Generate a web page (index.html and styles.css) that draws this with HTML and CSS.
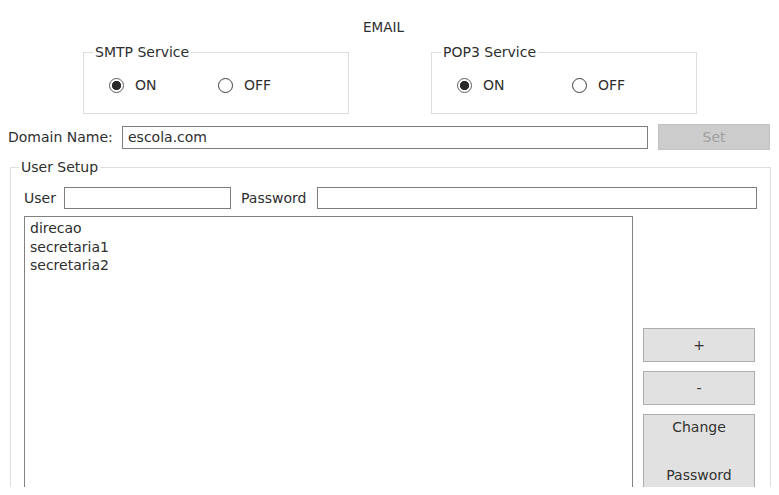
FILE: index.html
```html
<!DOCTYPE html>
<html lang="en">
<head>
<meta charset="utf-8">
<title>EMAIL</title>
<link rel="stylesheet" href="styles.css">
</head>
<body>
<div class="app">
  <div class="title">EMAIL</div>

  <div class="services">
    <fieldset class="group svc">
      <legend>SMTP Service</legend>
      <div class="radios">
        <label class="opt opt-first"><span class="radio checked"></span><span>ON</span></label>
        <label class="opt"><span class="radio"></span><span>OFF</span></label>
      </div>
    </fieldset>
    <fieldset class="group svc svc-pop">
      <legend>POP3 Service</legend>
      <div class="radios">
        <label class="opt opt-first"><span class="radio checked"></span><span>ON</span></label>
        <label class="opt"><span class="radio"></span><span>OFF</span></label>
      </div>
    </fieldset>
  </div>

  <div class="domain-row">
    <span class="domain-label">Domain Name:</span>
    <div class="field domain-field">escola.com</div>
    <div class="btn btn-disabled set-btn">Set</div>
  </div>

  <fieldset class="group users">
    <legend>User Setup</legend>
    <div class="cred-row">
      <span class="cred-label">User</span>
      <div class="field user-field"></div>
      <span class="cred-label pass-label">Password</span>
      <div class="field pass-field"></div>
    </div>
    <div class="user-body">
      <ul class="user-list">
        <li>direcao</li>
        <li>secretaria1</li>
        <li>secretaria2</li>
      </ul>
      <div class="actions">
        <div class="btn act-btn">+</div>
        <div class="btn act-btn">-</div>
        <div class="btn act-btn change-btn"><span>Change</span><span>Password</span></div>
      </div>
    </div>
  </fieldset>
</div>
</body>
</html>
```

FILE: styles.css
```css
html, body {
  margin: 0;
  padding: 0;
  background: #ffffff;
}

body {
  font-family: "DejaVu Sans", Verdana, sans-serif;
  font-size: 14px;
  color: #2e2e2e;
}

.app {
  width: 779px;
  height: 487px;
  overflow: hidden;
  box-sizing: border-box;
}

.title {
  height: 44px;
  box-sizing: border-box;
  padding-top: 19px;
  padding-right: 12px;
  text-align: center;
  line-height: 16px;
  font-size: 13.5px;
}

.group {
  margin: 0;
  padding: 0;
  border: 1px solid #dedede;
  min-width: 0;
}

.group legend {
  padding: 0 2px;
  margin-left: 9px;
  line-height: 16px;
}

.services {
  display: flex;
  padding-left: 83px;
  gap: 82px;
}

.svc {
  width: 266px;
  box-sizing: border-box;
  height: 70px;
}

.radios {
  display: flex;
  align-items: center;
  height: 22px;
  margin-top: 14px;
  padding-left: 25px;
}

.opt {
  display: flex;
  align-items: center;
  gap: 11px;
}

.opt-first {
  width: 109px;
}

.svc-pop .opt-first {
  width: 115px;
}

.radio {
  width: 15px;
  height: 15px;
  box-sizing: border-box;
  border: 1px solid #3c3c3c;
  border-radius: 50%;
  background: #ffffff;
}

.radio.checked {
  border: 1.6px solid #5e5e5e;
  background: radial-gradient(circle, #2a2a2a 0 4.3px, #ffffff 4.9px);
}

.domain-row {
  display: flex;
  align-items: center;
  padding-left: 8px;
  margin-top: 10px;
  height: 26px;
}

.domain-label {
  width: 114px;
  flex: none;
}

.field {
  box-sizing: border-box;
  height: 23px;
  border: 1px solid #7d7d7d;
  background: #ffffff;
  line-height: 21px;
  padding-left: 5px;
}

.domain-field {
  width: 526px;
}

.btn {
  box-sizing: border-box;
  display: flex;
  align-items: center;
  justify-content: center;
  background: #e1e1e1;
  border: 1px solid #adadad;
  color: #333333;
}

.btn-disabled {
  background: #cccccc;
  border-color: #c2c2c2;
  color: #a0a0a0;
}

.set-btn {
  width: 112px;
  height: 26px;
  margin-left: 10px;
}

.users {
  margin-top: 9px;
  margin-left: 10px;
  width: 761px;
  box-sizing: border-box;
  padding: 0 13px 0 13px;
}

.users legend {
  margin-left: -5px;
}

.cred-row {
  display: flex;
  align-items: center;
  margin-top: 12px;
  height: 22px;
}

.cred-row .field {
  height: 22px;
}

.cred-label {
  flex: none;
  width: 40px;
}

.pass-label {
  width: 76px;
}

.user-field {
  width: 167px;
  margin-right: 10px;
}

.pass-field {
  width: 440px;
}

.user-body {
  display: flex;
  margin-top: 7px;
  gap: 10px;
}

.user-list {
  list-style: none;
  margin: 0;
  box-sizing: border-box;
  width: 609px;
  height: 300px;
  border: 1px solid #828282;
  padding: 2px 0 0 5px;
  line-height: 18.5px;
}

.actions {
  display: flex;
  flex-direction: column;
  gap: 9px;
  padding-top: 112px;
}

.act-btn {
  width: 112px;
  height: 34px;
}

.change-btn {
  height: 80px;
  flex-direction: column;
  justify-content: flex-start;
  gap: 32px;
  padding-top: 4px;
}
```
